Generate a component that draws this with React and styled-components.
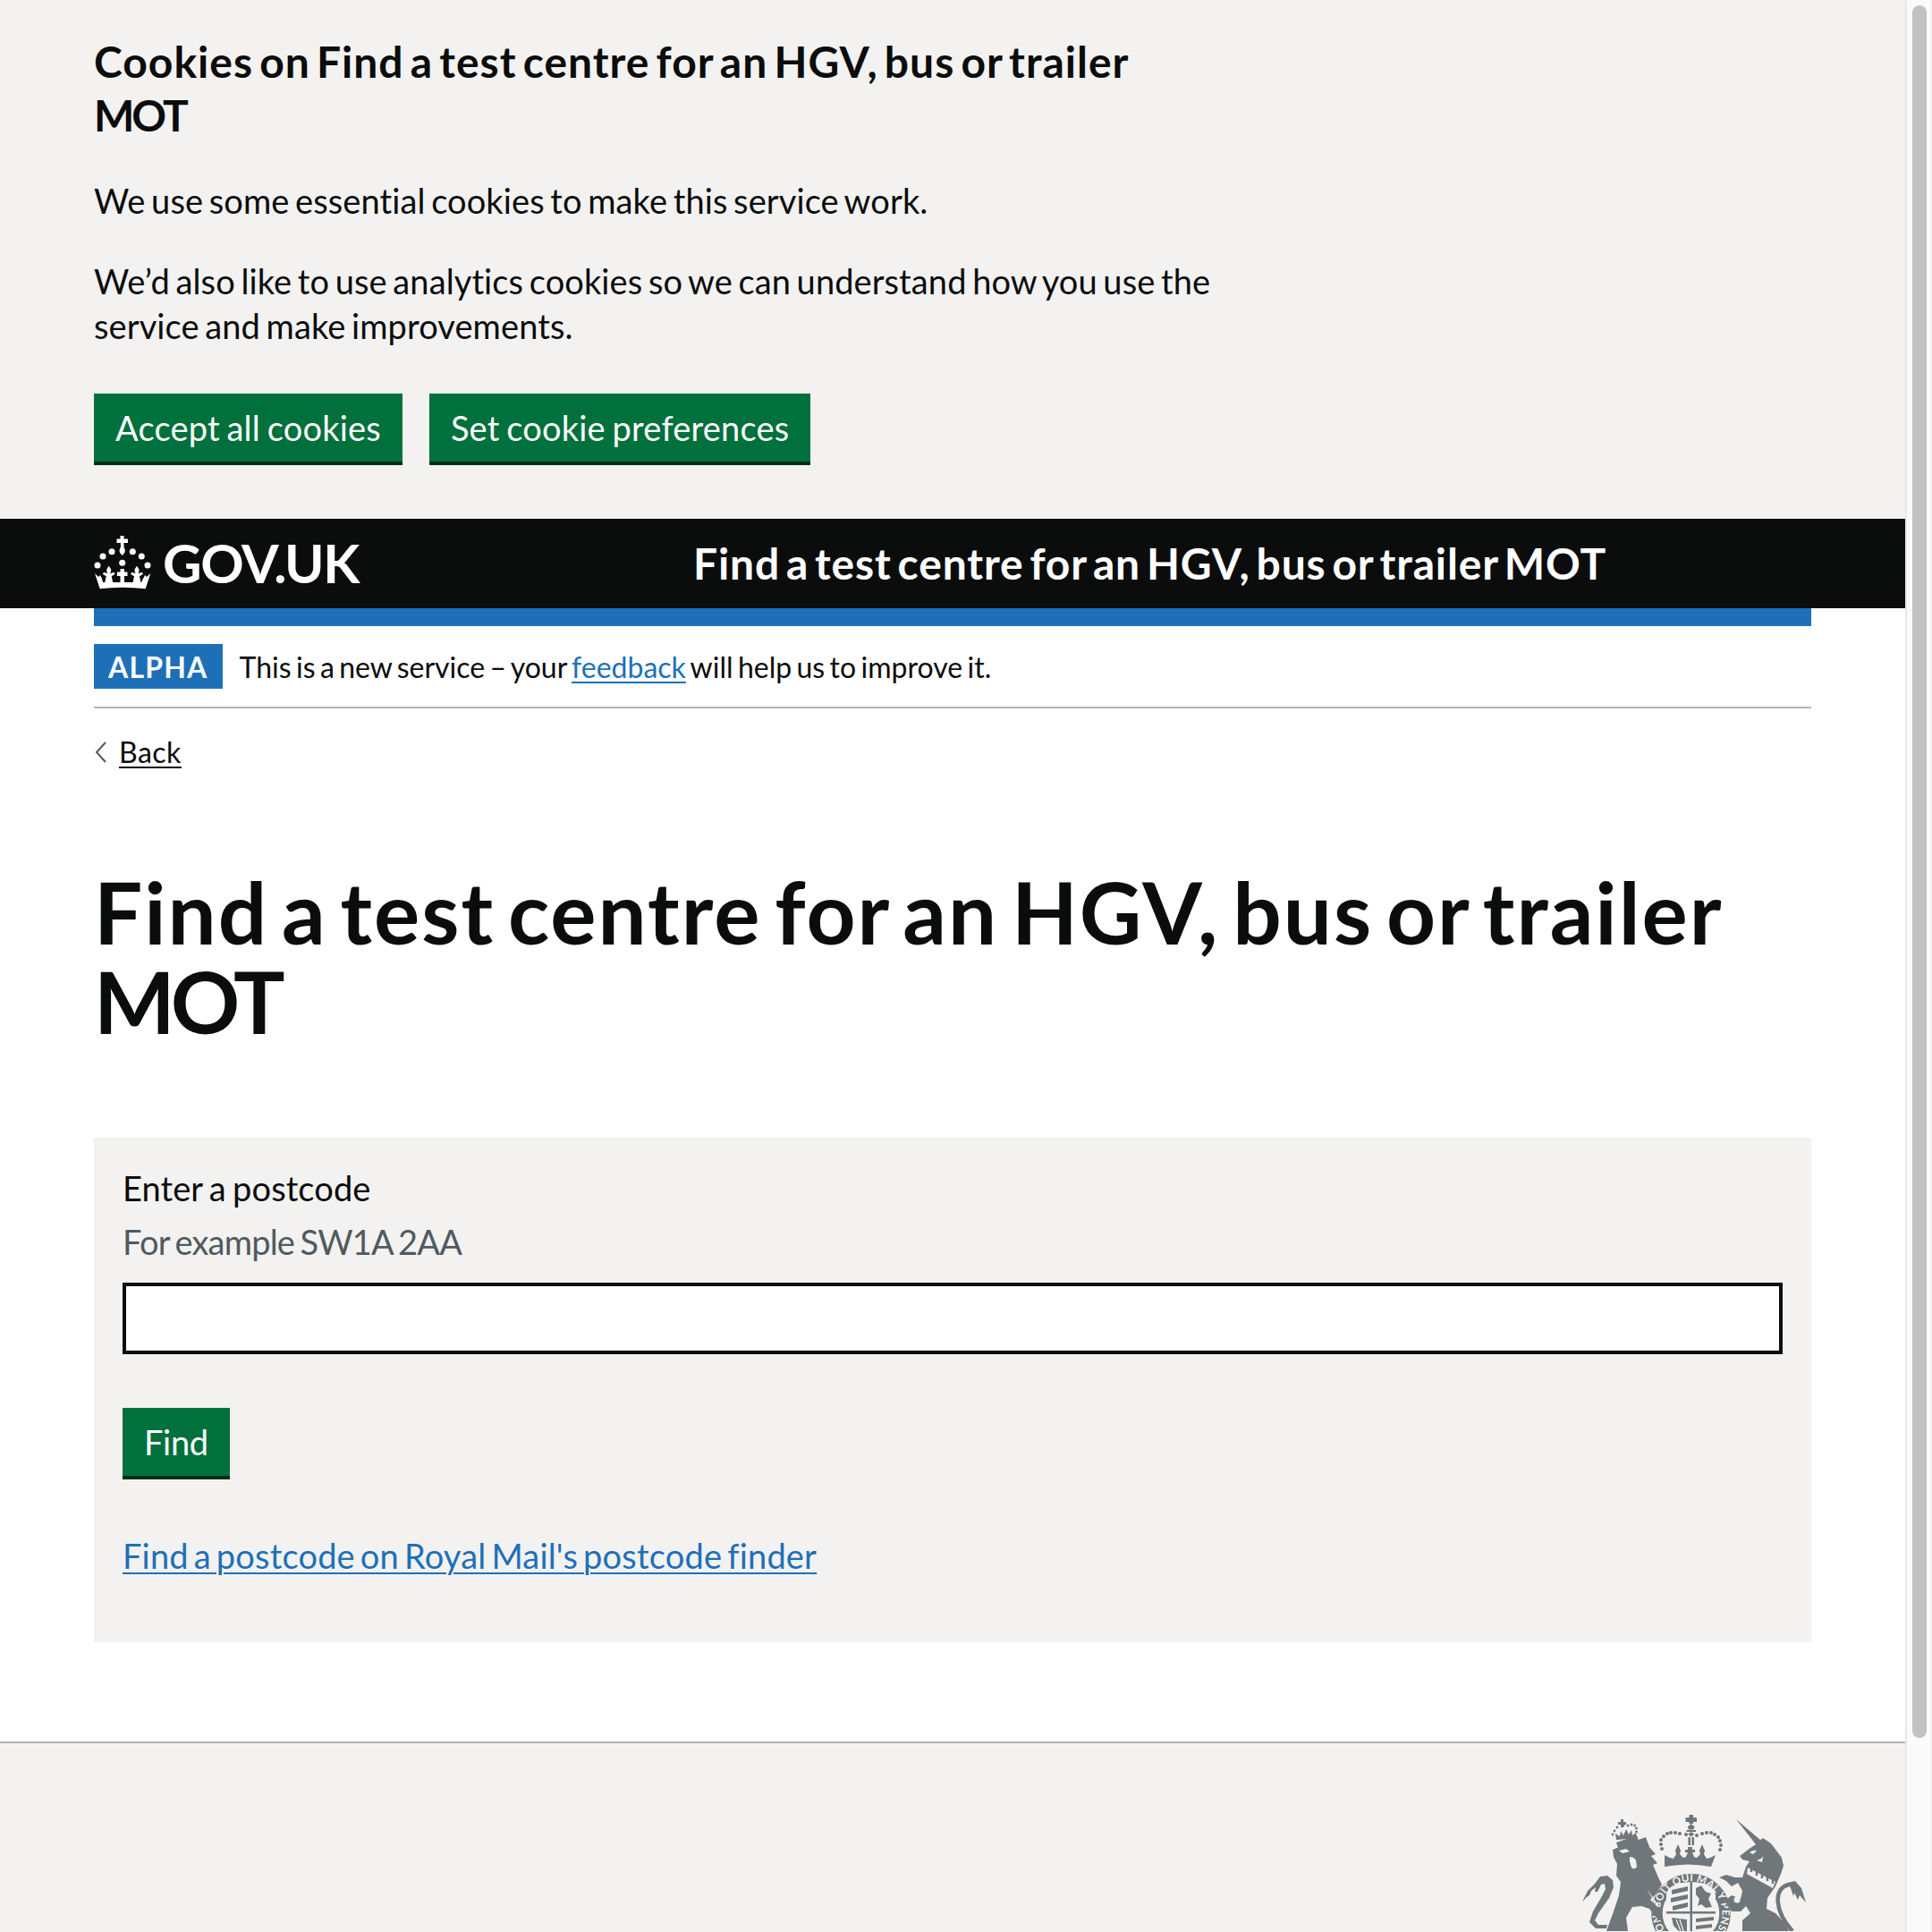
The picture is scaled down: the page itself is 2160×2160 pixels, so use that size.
import React from "react";
import styled, { createGlobalStyle } from "styled-components";

const Global = createGlobalStyle`
  html, body { margin: 0; padding: 0; height: 2160px; overflow: hidden; background: #fff; }
  body { font-family: Lato, "Liberation Sans", sans-serif; color: #0b0c0c; font-variant-ligatures: none; }
  * { box-sizing: border-box; }
`;

const Shell = styled.div`display: flex; height: 2160px; overflow: hidden;`;
const Page = styled.div`width: 2130px; flex: none;`;
const Scrollbar = styled.div`width: 30px; flex: none; background: #fafafa; border-left: 2px solid #e8e8e8; border-right: 1px solid #ededed; padding: 6px 0 0 6px;`;
const Thumb = styled.div`width: 16px; height: 1937px; border-radius: 8px; background: #c1c1c1;`;

const Banner = styled.div`background: #f3f2f1; padding: 39px 105px 60px;`;
const BannerTitle = styled.h2`margin: 0 0 40px; font-size: 48px; line-height: 60px; font-weight: 700; max-width: 1200px; letter-spacing: 1px; word-spacing: -5.5px;`;
const Text = styled.p`margin: 0 0 40px; font-size: 38px; line-height: 50px; max-width: 1280px; letter-spacing: 0.1px; word-spacing: -3.2px;`;
const Buttons = styled.div`display: flex; gap: 30px; margin-top: 51px;`;
const Button = styled.button`
  height: 80px; padding: 0 24px 4px; border: 0; background: #00703c; color: #fff;
  box-shadow: inset 0 -4px 0 #002d18; font: 400 38px/50px Lato, sans-serif;
  font-variant-ligatures: none; letter-spacing: 0.2px; word-spacing: -2.2px;
`;
const FindButton = styled(Button)`letter-spacing: -0.3px;`;

const Header = styled.header`height: 100px; padding: 0 0 2px 105px; background: #0b0c0c; display: flex; align-items: center;`;
const Logo = styled.div`display: flex; align-items: center; gap: 13px; width: 670px; color: #fff; font-size: 60px; font-weight: 700; letter-spacing: -1.3px;`;
const ServiceName = styled.div`color: #fff; font-size: 48px; font-weight: 700; letter-spacing: 0.85px; word-spacing: -5.6px;`;

const Container = styled.div`margin: 0 105px;`;
const BlueBar = styled.div`height: 20px; background: #1d70b8;`;
const Phase = styled.div`display: flex; align-items: center; gap: 19px; padding: 20px 0; border-bottom: 2px solid #b1b4b6; height: 92px; font-size: 32px; word-spacing: -2.8px;`;
const Tag = styled.strong`background: #1d70b8; color: #fff; height: 50px; padding: 0 16px; display: flex; align-items: center; letter-spacing: 1.2px; font-size: 32px;`;
const Link = styled.a`color: #1d70b8; text-decoration: underline; text-decoration-thickness: 2px; text-underline-offset: 4px;`;
const Back = styled.div`display: flex; align-items: center; gap: 12px; margin-top: 29px; font-size: 32px; line-height: 40px; letter-spacing: 0.5px; a { color: #0b0c0c; }`;
const Title = styled.h1`margin: 108px 0 103px; font-size: 96px; line-height: 100px; font-weight: 700; letter-spacing: 2px; word-spacing: -10.5px;`;
const Tight = styled.span`letter-spacing: ${(p) => p.$by}px;`;

const Panel = styled.div`background: #f3f2f1; padding: 31px 32px; height: 564px;`;
const Label = styled.div`font-size: 38px; line-height: 50px; letter-spacing: 0.1px; word-spacing: -2.5px;`;
const Hint = styled.div`font-size: 38px; line-height: 50px; color: #505a5f; margin: 10px 0 21px; letter-spacing: -0.8px; word-spacing: -2.5px;`;
const Input = styled.div`height: 80px; border: 4px solid #0b0c0c; background: #fff;`;
const FindRow = styled.div`margin: 60px 0;`;
const PanelLink = styled(Link)`font-size: 38px; line-height: 50px; letter-spacing: 0.2px; word-spacing: -4px;`;

const Footer = styled.footer`margin-top: 111px; border-top: 2px solid #b1b4b6; background: #f3f2f1; height: 400px; padding: 70px 100px 0 0; display: flex; justify-content: flex-end; align-items: flex-start;`;

const fleur = "c1.5 2 2.5 3.500 2.500 5 0 1.300-.7 2.500-1 3.500l4-1.500 1.500 2-4 2.500 1.500 7.300h-9l1.500-7.300-4-2.500 1.500-2 4 1.500c-.3-1-1-2.200-1-3.500 0-1.500 1-3 2.500-5z";

const Crown = () => (
  <svg width="64" height="60" viewBox="0 0 64 60" fill="#fff">
    <path d="M29.5 0h4v3.5H38v4.5h-4.5v4.5l1.5 4-1 3-2.300 2.500-2.300-2.500-1-3 1.500-4V8H25.500V3.500h4z" />
    <circle cx="20" cy="17.700" r="3.500" /><circle cx="43.300" cy="17.700" r="3.500" />
    <circle cx="10" cy="23" r="3.500" /><circle cx="53.300" cy="23" r="3.500" />
    <circle cx="4" cy="33" r="3.500" /><circle cx="60" cy="33" r="3.500" />
    <circle cx="31.700" cy="30.300" r="3.500" />
    <path d="M1 42l4 4 2-2 2 4 1 4h43l2-4 2-4 2 2 4.300-4-5.600 17.300q-25.700-3-51 0z" />
    <path d={"M16.700 33.700" + fleur} />
    <path d={"M48 33.700" + fleur} />
    <path d="M29.500 37h4.400v3.500h3.600v4.400h-3.600V52h-4.400v-7.100h-3.600v-4.400h3.600z" />
  </svg>
);

const dots = (list, r) => list.map(([x, y]) => <circle key={x + "-" + y} cx={x} cy={y} r={r} />);

// royal coat of arms, cropped by the bottom of the page
const Crest = () => {
  const bg = "#f3f2f1";
  return (
    <svg width="270" height="140" viewBox="0 0 270 140" fill="#6f777b">
      {/* big crown */}
      <path d="M128.500 10h4.500v3h4v5h-4v2h-4.500v-2h-4v-5h4z" />
      <path d="M130.700 20l4 3.500-1.500 3h-5l-1.500-3z" />
      <path d="M125.500 27h10.500v2h-10.500zM130.700 29l3.500 2.500-3.500 3-3.500-3z" />
      <path d="M127.500 35h2.500v9h-2.500zM131.500 35h2.500v9h-2.500z" />
      {dots([[125, 32], [118, 31], [113, 30], [108, 30], [104, 31], [100, 34], [97, 38], [97, 43], [98, 48], [137, 33], [143, 31], [148, 30], [153, 30], [157, 32], [161, 35], [163, 39], [164, 44], [163, 49]], 2)}
      <path d="M101 55l6 3 4 1 3-5-1-4 3-7 3 7-1 4 4 4 3-1 2-5h-3v-3h3v-3h5v3h3v3h-3l2 5 3 1 4-4-1-4 3-7 3 7-1 4 3 5 4-1 6-3-5 13q-25-5-52 0z" />
      {/* garter and shield */}
      <circle cx="130.500" cy="120" r="38" fill="none" stroke="#6f777b" strokeWidth="12.500" />
      <path d="M111 71q20-4 39 0a3.500 3.500 0 0 1 3 6q-22-4-45 0a3.500 3.500 0 0 1 3-6z" fill={bg} />
      <path id="garter" d="M115.500 151A35 35 0 1 1 145.500 151" fill="none" />
      <text fontFamily="Lato, sans-serif" fontWeight="700" fontSize="11.500" fill={bg} letterSpacing="0.3">
        <textPath href="#garter" startOffset="10">HONI SOIT QUI MAL Y PENSE</textPath>
      </text>
      <path d="M103 100q1-14 27.500-15 26.500 1 27.500 15v27q0 15-27.500 25-27.500-10-27.500-25z" fill={bg} />
      <path d="M129.500 85h2.500v55h-2.500zM103 118h55v2.500h-55z" />
      <path d="M109 94l18-4v5l-18 4zM108 103l19-4v5l-19 4zM110 112l17-4v5l-17 4zM136 92l6-3 5 7 6 2-3 6 4 9-7 1-5-4-4 2 2-8-4-5z" />
      <path d="M136 126l20-2v4l-20 2zM136 134l18-2v4l-18 2zM109 125l17 2v13h-9l-6-6z" />
      <path d="M114 127l5 13M118 127l4 13" stroke={bg} strokeWidth="1.200" />
      {/* lion */}
      <path d="M47 41l23-8 2 6-23 8z" />
      {dots([[43, 32], [45, 28], [48, 24], [60, 22], [64, 21], [67.500, 22], [69.500, 25], [69.500, 29], [55, 22]], 1.400)}
      <path d="M52 15h3v3h3v3h-3v3h-3v-3h-3v-3h3zM47 38l-1-7 5 3 1-6 3 5 3-7 3 6 3-5 1 6 4-3 1 6z" />
      <path d="M43 49l17-7 20-7 4 11 7 8-5 2 7 8-5 2 6 14 4 8-6 10-7 7-7-7 17 17 5 15-8-5-8-10-9-3-10 1-7 12 2 15h-24l8-22 6-18 2-15-5-7 1-13-4-8z" />
      <path d="M50 50l8-2 4 3-8 2zM62 57q5 0 7 4l1 7q-3 4-6 1l-2-7z" fill={bg} />
      <path d="M81 93l14 19-2 1z" fill={bg} />
      <path d="M9 107l6-12 8-8 6-8 8-1 6 5 1 8-5 12-12 17-4 8 4 5 10 0-1 4-12 0-7-7 4-12 10-17 4-8-1-6-4 1-4 8-3 0 1-5-5 4-2 5-3 2z" />
      {/* unicorn */}
      <path d="M181 15l27 23 3-2 9 6 12 16 2 9-3 9-6 14-9 13-1 12 10 5 11 12 4 8h-52v-12l9-8-5-8-6 6h-10l-8-12 8-6 10 4 2-9-5-9-7 4-6-6-8-4 8-3 10 3h8l4-12 4-6-8-2-3-4 12-9 6-4z" />
      <path d="M194 69l31 16-3 7-29-16z" fill={bg} />
      <path d="M198 69v5M204 72v6M210 75v6M216 78v6M222 81v6" stroke="#6f777b" strokeWidth="2.500" />
      <circle cx="185" cy="76" r="3.500" fill={bg} /><circle cx="182" cy="105" r="3.500" fill={bg} /><circle cx="227" cy="113" r="3.500" fill={bg} />
      <path d="M196 52q4-3 8-2l-4 4zM204 61q8-2 8-8l-2 10z" fill={bg} />
      <path d="M244 140C224 118 222 92 240 88" fill="none" stroke="#6f777b" strokeWidth="4.500" />
      <path d="M238 86l9-2 7 8 5 16-7-8-2 5-4-8-1 4-3-9z" />
    </svg>
  );
};

export default function App() {
  return (
    <Shell>
      <Global />
      <Page>
        <Banner>
          <BannerTitle>Cookies on Find a test centre for an HGV, bus or trailer <Tight $by={-3}>MOT</Tight></BannerTitle>
          <Text>We use some essential cookies to make this service work.</Text>
          <Text>We’d also like to use analytics cookies so we can understand how you use the service and make improvements.</Text>
          <Buttons>
            <Button>Accept all cookies</Button>
            <Button>Set cookie preferences</Button>
          </Buttons>
        </Banner>
        <Header>
          <Logo><Crown />GOV.UK</Logo>
          <ServiceName>Find a test centre for an HGV, bus or trailer MOT</ServiceName>
        </Header>
        <Container>
          <BlueBar />
          <Phase>
            <Tag>ALPHA</Tag>
            <span>This is a new service – your <Link href="#">feedback</Link> will help us to improve it.</span>
          </Phase>
          <Back>
            <svg width="16" height="24" viewBox="0 0 16 24" fill="none" stroke="#505a5f" strokeWidth="2"><path d="M13 1L3 12l10 11" /></svg>
            <Link href="#">Back</Link>
          </Back>
          <Title>Find a test centre for an HGV, bus or trailer <Tight $by={-5}>MOT</Tight></Title>
          <Panel>
            <Label>Enter a postcode</Label>
            <Hint>For example SW1A 2AA</Hint>
            <Input />
            <FindRow><FindButton>Find</FindButton></FindRow>
            <PanelLink href="#">Find a postcode on Royal Mail's postcode finder</PanelLink>
          </Panel>
        </Container>
        <Footer><Crest /></Footer>
      </Page>
      <Scrollbar><Thumb /></Scrollbar>
    </Shell>
  );
}
